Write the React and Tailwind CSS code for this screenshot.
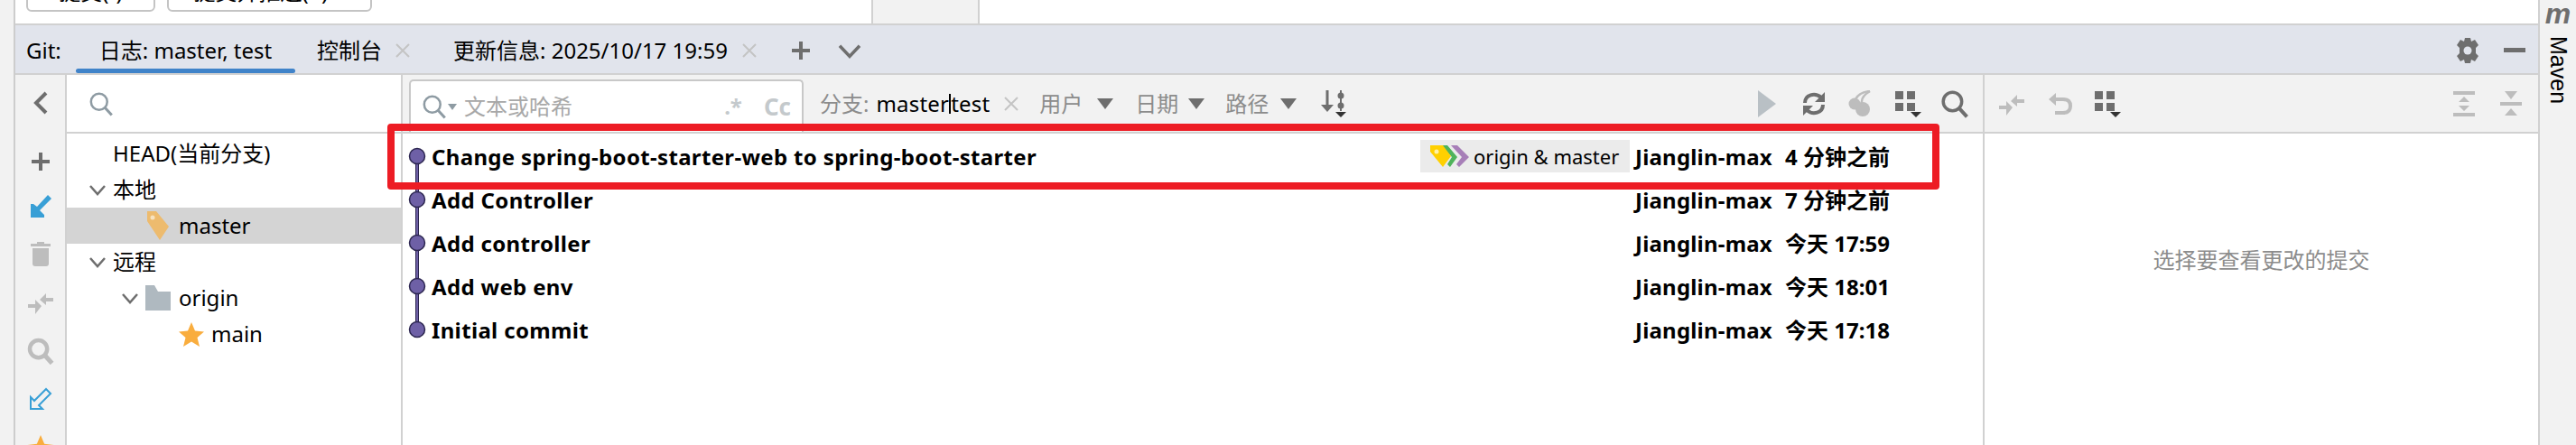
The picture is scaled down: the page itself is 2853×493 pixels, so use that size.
const GRAY = '#6e6e6e';
const LIGHT = '#bdbdbd';
const BLUE = '#389fd6';

const commits = [
  { title: 'Change spring-boot-starter-web to spring-boot-starter', time: '4 分钟之前', label: true },
  { title: 'Add Controller', time: '7 分钟之前' },
  { title: 'Add controller', time: '今天 17:59' },
  { title: 'Add web env', time: '今天 18:01' },
  { title: 'Initial commit', time: '今天 17:18' },
];

const Svg = ({ w = 32, h = 32, className = '', children }) => (
  <svg width={w} height={h} viewBox={`0 0 ${w} ${h}`} className={`shrink-0 ${className}`}>{children}</svg>
);

const Close = ({ className = '' }) => (
  <Svg w={16} h={16} className={className}>
    <path d="M1 1L15 15M15 1L1 15" stroke="#c4c4c4" strokeWidth="2" fill="none" />
  </Svg>
);

const Chevron = ({ color = GRAY, size = 20, width = 2.5 }) => (
  <Svg w={size} h={size}>
    <path d={`M2 ${size * 0.3}L${size / 2} ${size * 0.75}L${size - 2} ${size * 0.3}`} stroke={color} strokeWidth={width} fill="none" />
  </Svg>
);

const Triangle = ({ className = '' }) => (
  <Svg w={18} h={12} className={className}>
    <path d="M0 0H18L9 12Z" fill={GRAY} />
  </Svg>
);

const Plus = () => (
  <Svg w={22} h={22}>
    <path d="M11 1V21M1 11H21" stroke={GRAY} strokeWidth="4" fill="none" />
  </Svg>
);

const Search = ({ color = GRAY, w = 3.5, size = 32 }) => (
  <Svg w={size} h={size} >
    <circle cx={size * 0.42} cy={size * 0.42} r={size * 0.32} stroke={color} strokeWidth={w} fill="none" />
    <path d={`M${size * 0.65} ${size * 0.65}L${size * 0.92} ${size * 0.95}`} stroke={color} strokeWidth={w + 0.5} fill="none" />
  </Svg>
);

const ArrowIn = ({ outline }) => (
  <Svg w={26} h={28}>
    {outline ? (
      <path d="M19 2L24 7L11 20L15 24H2V11L6 15Z" fill="none" stroke={BLUE} strokeWidth="2" />
    ) : (
      <path d="M21 1L25 5L12 18L17 23V26H2V11H5L9 14Z" fill={BLUE} />
    )}
  </Svg>
);

const Trash = () => (
  <Svg w={22} h={28}>
    <path d="M7 0H15V2H22V5H0V2H7ZM2 7H20V24Q20 27 17 27H5Q2 27 2 24Z" fill={LIGHT} />
  </Svg>
);

const Merge = () => (
  <Svg w={28} h={28}>
    <path d="M28 9H20V4L13 11L20 17V13H28ZM0 16H8V11L15 18L8 27V20H0Z" fill={LIGHT} />
  </Svg>
);

const Star = ({ w = 28, h = 27 }) => (
  <svg width={w} height={h} viewBox="0 0 28 27" className="shrink-0">
    <path d="M14 0L18 9.5L28 10.5L20.5 17L23 27L14 21.500L5 27L7.500 17L0 10.500L10 9.500Z" fill="#f9ad3e" />
  </svg>
);

const Grid = () => (
  <Svg w={30} h={32}>
    <path d="M0 2H9V11H0ZM13 2H22V11H13ZM0 15H9V24H0ZM13 15H22V24H13Z" fill={GRAY} />
    <path d="M17 25H29L23 31Z" fill="#333333" />
  </Svg>
);

const Undo = () => (
  <Svg w={28} h={28}>
    <path d="M9 2L1 9L9 16V11H17Q23 11 23 16.500Q23 22 17 22H8V26H17Q27 26 27 16.500Q27 7 17 7H9Z" fill={LIGHT} />
  </Svg>
);

const Refresh = () => (
  <Svg w={28} h={30}>
    <path d="M4 14C4 5 15 2 22 8" stroke={GRAY} strokeWidth="4" fill="none" />
    <path d="M24 16C24 25 13 28 6 22" stroke={GRAY} strokeWidth="4" fill="none" />
    <path d="M26 2V13H15ZM2 28V17H13Z" fill={GRAY} />
  </Svg>
);

const Cherry = () => (
  <Svg w={26} h={30}>
    <circle cx="16" cy="21" r="8" fill={LIGHT} />
    <circle cx="7" cy="15" r="6.500" fill={LIGHT} />
    <path d="M8 10Q12 2 24 1" stroke={LIGHT} strokeWidth="2.500" fill="none" />
    <path d="M15 14Q14 7 24 1" stroke={LIGHT} strokeWidth="2.500" fill="none" />
  </Svg>
);

const SortIcon = () => (
  <Svg w={32} h={32}>
    <path d="M7 1V18" stroke={GRAY} strokeWidth="3" />
    <path d="M0 17H14L7 25Z" fill={GRAY} />
    <path d="M22 1V24" stroke={GRAY} strokeWidth="2" />
    <circle cx="22" cy="7" r="3.500" fill={GRAY} />
    <circle cx="22" cy="18" r="3.500" fill={GRAY} />
    <path d="M16 25H28L22 31Z" fill="#333333" />
  </Svg>
);

const ExpandAll = () => (
  <Svg w={24} h={28}>
    <path d="M0 0H24V4H0ZM0 24H24V28H0ZM12 6L18 12H6ZM6 16H18L12 22Z" fill={LIGHT} />
  </Svg>
);

const CollapseAll = () => (
  <Svg w={24} h={28}>
    <path d="M0 12H24V16H0ZM5 0H19L12 9ZM12 19L19 27H5Z" fill={LIGHT} />
  </Svg>
);

const Gear = () => (
  <Svg w={26} h={28}>
    <path d="M10 0H16L17 4L21 2L25 8L22 11V17L25 20L21 26L17 24L16 28H10L9 24L5 26L1 20L4 17V11L1 8L5 2L9 4Z" fill={GRAY} />
    <circle cx="13" cy="14" r="4.500" fill="#e1e4ec" />
  </Svg>
);

const TagIcon = () => (
  <Svg w={28} h={34}>
    <path d="M2 1H12L26 18L16 33L2 12Z" fill="#edbb6e" />
    <circle cx="8" cy="8" r="2.500" fill="#f7e3c0" />
  </Svg>
);

const FolderIcon = () => (
  <Svg w={28} h={28}>
    <path d="M0 0H10L14 7H28V28H0Z" fill="#afb9c0" />
  </Svg>
);

const RefTags = () => (
  <Svg w={46} h={26}>
    <path d="M25 1H32L45 14L34 25L31 22L37 14Z" fill="#a77fb8" />
    <path d="M14 1H21L32 14L24 25L21 22L26 14Z" fill="#4fb35b" />
    <path d="M2 1H16L25 13L16 25L2 8Z" fill="#ffd000" />
    <circle cx="9" cy="8" r="2.500" fill="#fff2a8" />
  </Svg>
);

const TreeRow = ({ pad, selected, chevron, icon, children }) => (
  <div className={`flex items-center h-[40px] ${pad} ${selected ? 'bg-[#d4d4d4]' : ''}`}>
    {chevron && <span className="w-[27px] flex"><Chevron /></span>}
    {icon}
    <span className="text-black">{children}</span>
  </div>
);

const CommitDot = ({ first, last }) => (
  <Svg w={32} h={48}>
    {!first && <path d="M16 0V24" stroke="#2c2650" strokeWidth="4" />}
    {!last && <path d="M16 24V48" stroke="#2c2650" strokeWidth="4" />}
    {!first && <path d="M16 0V24" stroke="#6e60a6" strokeWidth="2" />}
    {!last && <path d="M16 24V48" stroke="#6e60a6" strokeWidth="2" />}
    <circle cx="16" cy="24" r="8.500" fill="#6e60a6" stroke="#2c2650" strokeWidth="1.500" />
  </Svg>
);

export default function App() {
  return (
    <div className="relative flex w-[2853px] h-[493px] overflow-hidden bg-white text-[24px] font-['Noto_Sans','Noto_Sans_CJK_SC',sans-serif]">
      {/* left stripe */}
      <div className="w-[17px] shrink-0 bg-[#f2f2f2] border-r-2 border-[#cdcdcd]" />

      <div className="flex flex-col w-[2794px] shrink-0">
        {/* commit buttons, cut by the crop */}
        <div className="flex h-[28px] shrink-0 border-b-2 border-[#d1d1d1] pl-[12px] gap-[13px] overflow-visible">
          <div className="flex items-center justify-center w-[143px] h-[44px] -mt-[31px] bg-white border-2 border-[#c4c4c4] rounded-[6px] text-black">提交(I)</div>
          <div className="flex items-center justify-center w-[227px] h-[44px] -mt-[31px] bg-white border-2 border-[#c4c4c4] rounded-[6px] text-black">提交并推送(P)...</div>
          <div className="w-[120px] ml-[540px] h-[26px] bg-[#f2f2f2] border-x-2 border-[#d1d1d1]" />
        </div>

        {/* tab bar */}
        <div className="flex items-center h-[55px] shrink-0 bg-[#e1e4ec] border-b-2 border-[#d1d1d1] pt-[2px] pl-[12px] pr-[14px]">
          <span className="w-[55px]">Git:</span>
          <div className="relative flex items-center justify-center w-[243px] h-full">
            日志: master, test
            <div className="absolute left-0 right-0 bottom-0 h-[5px] rounded-[3px] bg-[#4083c9]" />
          </div>
          <span className="ml-[24px]">控制台</span>
          <Close className="ml-[15px]" />
          <span className="ml-[48px]">更新信息: 2025/10/17 19:59</span>
          <Close className="ml-[16px]" />
          <span className="ml-[38px] flex"><Plus /></span>
          <span className="ml-[30px] flex"><Chevron size={26} width={3.5} /></span>
          <span className="ml-auto flex"><Gear /></span>
          <div className="ml-[27px] w-[24px] h-[5px] bg-[#6e6e6e]" />
        </div>

        <div className="flex flex-1 min-h-0">
          {/* side actions */}
          <div className="flex flex-col items-center w-[57px] shrink-0 bg-[#f2f2f2] pt-[18px] border-r-2 border-[#d1d1d1]">
            <Svg w={18} h={26}>
              <path d="M15 2L4 13L15 24" stroke={GRAY} strokeWidth="4" fill="none" />
            </Svg>
            <div className="w-[40px] h-[2px] mt-[19px] bg-[#d1d1d1]" />
            <div className="flex flex-col items-center gap-[25px] mt-[22px]">
              <Plus />
              <ArrowIn />
              <Trash />
              <Merge />
              <Search color={LIGHT} w={4.5} size={30} />
              <ArrowIn outline />
              <Star w={30} h={28} />
            </div>
          </div>

          {/* branch tree */}
          <div className="flex flex-col w-[372px] shrink-0 border-r-2 border-[#d1d1d1]">
            <div className="flex items-center h-[65px] shrink-0 pl-[24px] border-b-2 border-[#d1d1d1]">
              <Search color="#8e9ba3" w={2.5} size={28} />
            </div>
            <div className="flex flex-col pt-[2px]">
              <TreeRow pad="pl-[51px]">HEAD(当前分支)</TreeRow>
              <TreeRow pad="pl-[24px]" chevron>本地</TreeRow>
              <TreeRow pad="pl-[87px]" selected icon={<span className="w-[37px] flex"><TagIcon /></span>}>master</TreeRow>
              <TreeRow pad="pl-[24px]" chevron>远程</TreeRow>
              <TreeRow pad="pl-[60px]" chevron icon={<span className="w-[37px] flex"><FolderIcon /></span>}>origin</TreeRow>
              <TreeRow pad="pl-[124px]" icon={<span className="w-[36px] flex"><Star /></span>}>main</TreeRow>
            </div>
          </div>

          {/* commit log */}
          <div className="flex flex-col w-[1752px] shrink-0 border-r-2 border-[#d1d1d1]">
            <div className="flex items-center h-[65px] shrink-0 bg-[#f2f2f2] border-b-2 border-[#d1d1d1] pl-[7px] text-[#8c8c8c]">
              <div className="flex items-center self-end w-[437px] h-[58px] bg-white border-2 border-b-0 border-[#c8c8c8] rounded-t-[5px] pl-[12px] pr-[12px]">
                <Search color="#8e9ba3" w={2.5} size={28} />
                <Svg w={10} h={7} className="ml-[1px]"><path d="M0 0H10L5 7Z" fill="#8e9ba3" /></Svg>
                <span className="ml-[8px] text-[#a8a8a8]">文本或哈希</span>
                <span className="ml-auto font-bold text-[#c4c9cc]">.*</span>
                <span className="ml-[24px] text-[26px] font-bold text-[#c4c9cc]">Cc</span>
              </div>
              <span className="ml-[18px]">分支:</span>
              <span className="ml-[8px] text-black flex items-center tracking-[0.2px]">master<span className="w-[2px] h-[22px] bg-black" />test</span>
              <Close className="ml-[16px]" />
              <span className="ml-[23px]">用户</span>
              <Triangle className="ml-[16px]" />
              <span className="ml-[24px]">日期</span>
              <Triangle className="ml-[11px]" />
              <span className="ml-[23px]">路径</span>
              <Triangle className="ml-[13px]" />
              <span className="ml-[27px] flex"><SortIcon /></span>
              <div className="flex items-center ml-auto pr-[15px]">
                <Svg w={20} h={30}><path d="M0 0L20 15L0 30Z" fill="#b9c0c5" /></Svg>
                <span className="ml-[28px] flex"><Refresh /></span>
                <span className="ml-[24px] flex"><Cherry /></span>
                <span className="ml-[26px] flex"><Grid /></span>
                <span className="ml-[20px] flex"><Search /></span>
              </div>
            </div>

            <div className="flex flex-col pt-[1px]">
              {commits.map((c, i) => (
                <div key={i} className="flex items-center h-[48px] font-bold text-black">
                  <span className="flex"><CommitDot first={i === 0} last={i === commits.length - 1} /></span>
                  <span className="flex-1 pt-[2px] tracking-[0.34px]">{c.title}</span>
                  {c.label && (
                    <div className="flex items-center w-[232px] h-[36px] mr-[6px] pl-[9px] bg-[#ebebeb] font-normal">
                      <RefTags />
                      <span className="ml-[4px] text-[22px] whitespace-nowrap">origin &amp; master</span>
                    </div>
                  )}
                  <span className="w-[166px] pt-[2px] tracking-[0.2px]">Jianglin-max</span>
                  <span className="w-[219px] pt-[2px]">{c.time}</span>
                </div>
              ))}
            </div>
          </div>

          {/* details panel */}
          <div className="flex flex-col flex-1 min-w-0">
            <div className="flex items-center h-[65px] shrink-0 bg-[#f2f2f2] border-b-2 border-[#d1d1d1] pl-[16px] pr-[18px]">
              <Merge />
              <span className="ml-[26px] flex"><Undo /></span>
              <span className="ml-[24px] flex"><Grid /></span>
              <span className="ml-auto flex"><ExpandAll /></span>
              <span className="ml-[28px] flex"><CollapseAll /></span>
            </div>
            <div className="flex justify-center pt-[122px] text-[#8c8c8c]">选择要查看更改的提交</div>
          </div>
        </div>
      </div>

      {/* maven stripe */}
      <div className="flex flex-col items-center flex-1 bg-[#f2f2f2] border-l-2 border-[#d1d1d1]">
        <span className="h-[30px] text-[32px] leading-[30px] font-bold italic text-[#6e6e6e] font-['Liberation_Sans',sans-serif]">m</span>
        <span className="mt-[10px] text-[25px] text-black [writing-mode:vertical-rl] font-['Liberation_Sans',sans-serif]">Maven</span>
      </div>

      {/* red annotation box drawn over the first commit */}
      <div className="absolute left-[429px] top-[137px] w-[1719px] h-[73px] border-[8px] border-[#ed1c24] rounded-[4px]" />
    </div>
  );
}
